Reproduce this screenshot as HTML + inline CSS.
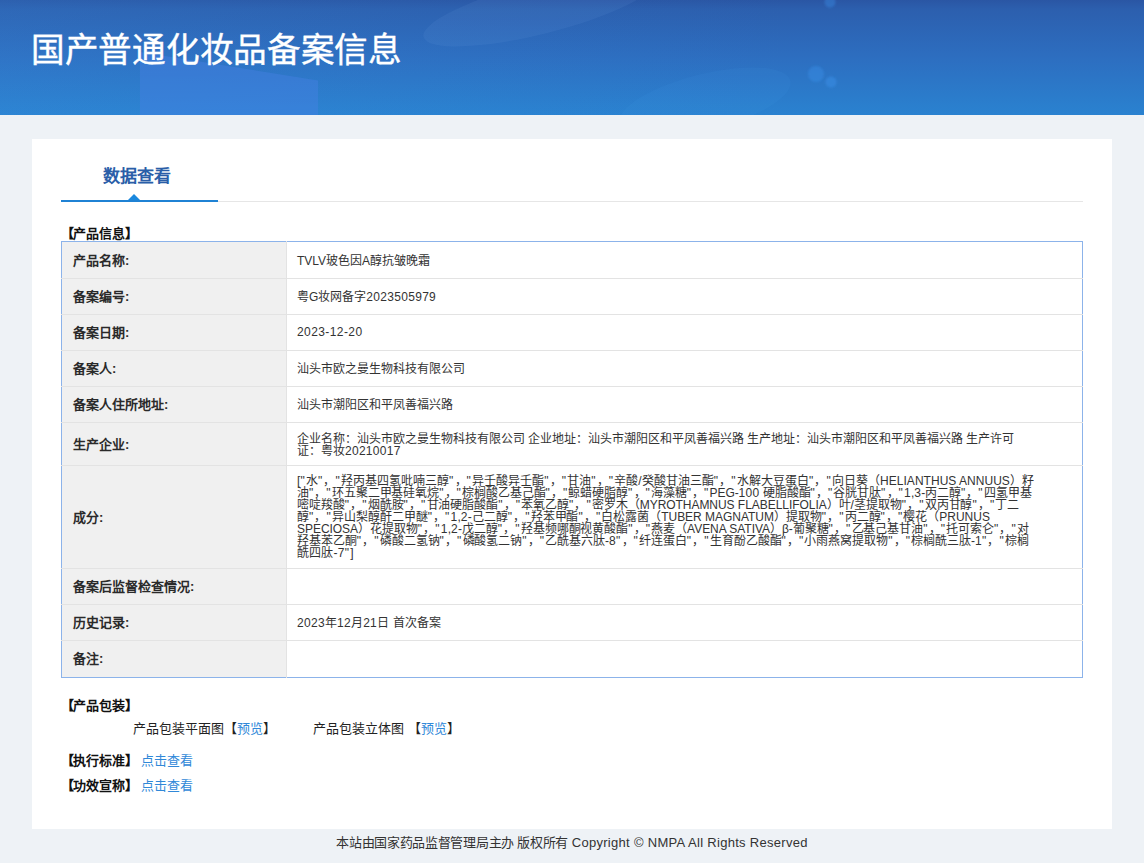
<!DOCTYPE html>
<html lang="zh-CN"><head><meta charset="utf-8">
<style>
*{margin:0;padding:0;box-sizing:border-box}
html,body{width:1144px;height:863px;overflow:hidden}
body{background:#eef2f6;font-family:"Liberation Sans",sans-serif;color:#333;position:relative}
#hd{position:absolute;left:0;top:0;width:1144px;height:115px;overflow:hidden;
 background:linear-gradient(90deg,rgba(60,150,230,0.16) 0%,rgba(60,150,230,0.05) 40%,rgba(60,150,230,0) 70%),linear-gradient(180deg,#2a56a4 0%,#2c5fae 8%,#2d6ec0 50%,#2a82d0 100%)}
#hd svg{position:absolute;left:0;top:0}
#hd h1{position:absolute;left:31px;top:28px;letter-spacing:-0.3px;font-size:33.6px;font-weight:normal;-webkit-text-stroke:0.4px #fff;color:#fff;line-height:46px;white-space:nowrap}
#card{position:absolute;left:32px;top:139px;width:1080px;height:690px;background:#fff}
#tab{position:absolute;left:71px;top:26px;font-size:17px;font-weight:bold;color:#2a5ea8;line-height:24px}
#tline{position:absolute;left:29px;top:62px;width:1022px;height:1px;background:#e6e6e6}
#tblue{position:absolute;left:29px;top:61px;width:157px;height:2px;background:#1f82d4}
#tri{position:absolute;left:96px;top:55px;width:0;height:0;border-left:6px solid transparent;border-right:6px solid transparent;border-bottom:6px solid #1a88de}
.sec{position:absolute;font-size:13px;font-weight:bold;color:#111;line-height:16px;white-space:nowrap;letter-spacing:-0.2px}
table{position:absolute;left:29px;top:102px;width:1022px;border-collapse:collapse;border:1px solid #8cb3ea}
td{border-top:1px solid #e3e3e3;font-size:12px;vertical-align:middle;padding-bottom:2px}
tr:first-child td{border-top:0}
tr:last-child td{padding-bottom:4px}
td.l{width:225px;background:#f0f0f0;font-weight:bold;font-size:13px;color:#2a2a2a;padding-left:11px;border-right:1px solid #e3e3e3}
td.v{padding-left:10px;color:#333;font-weight:350}
.pk{position:absolute;font-size:13px;color:#222;line-height:16px;white-space:nowrap;font-weight:350}
.lk{color:#3088d8}
.ml{line-height:12px;white-space:nowrap;position:relative;top:1px}
.ml div{display:block;white-space:nowrap}
.q{letter-spacing:1.2px}
.d{letter-spacing:0.3px}
#ft{position:absolute;left:0;top:834px;width:1144px;text-align:center;font-size:13px;color:#333;line-height:18px;font-weight:350}
</style></head><body>
<div id="hd"><svg width="1144" height="115" viewBox="0 0 1144 115">
<defs><filter id="bl" x="-20%" y="-20%" width="140%" height="140%"><feGaussianBlur stdDeviation="1.2"/></filter></defs>
<polygon points="140,52 318,80.5 318,115 140,115" fill="rgb(72,128,228)" fill-opacity="0.42"/>
<ellipse cx="540" cy="8" rx="120" ry="26" transform="rotate(-14 540 8)" fill="rgb(150,200,255)" fill-opacity="0.07"/>
<ellipse cx="705" cy="102" rx="88" ry="28" transform="rotate(-14 705 102)" fill="rgb(80,170,240)" fill-opacity="0.08"/>
<circle cx="816" cy="74" r="8" fill="rgb(60,150,240)" fill-opacity="0.35" filter="url(#bl)"/>
<circle cx="831" cy="82" r="5.5" fill="rgb(60,150,240)" fill-opacity="0.4" filter="url(#bl)"/>
<circle cx="830" cy="2" r="5.5" fill="rgb(60,150,240)" fill-opacity="0.35" filter="url(#bl)"/>
</svg><h1>国产普通化妆品备案信息</h1></div>
<div id="card">
 <div id="tab">数据查看</div>
 <div id="tline"></div><div id="tblue"></div><div id="tri"></div>
 <div class="sec" style="left:28.5px;top:86.5px">【产品信息】</div>
 <table>
  <tr style="height:37px"><td class="l">产品名称:</td><td class="v"><span id="v1">TVLV玻色因A醇抗皱晚霜</span></td></tr>
  <tr style="height:36px"><td class="l">备案编号:</td><td class="v"><span id="v2">粤G妆网备字<span class="d">2023505979</span></span></td></tr>
  <tr style="height:36px"><td class="l">备案日期:</td><td class="v"><span id="v3"><span style="letter-spacing:0.41px">2023-12-20</span></span></td></tr>
  <tr style="height:36px"><td class="l">备案人:</td><td class="v"><span id="v4">汕头市欧之曼生物科技有限公司</span></td></tr>
  <tr style="height:36px"><td class="l">备案人住所地址:</td><td class="v"><span id="v5">汕头市潮阳区和平凤善福兴路</span></td></tr>
  <tr style="height:43px"><td class="l">生产企业:</td><td class="v"><div class="ml" style="top:2px"><div id="m1" style="letter-spacing:-0.016px">企业名称：汕头市欧之曼生物科技有限公司 企业地址：汕头市潮阳区和平凤善福兴路 生产地址：汕头市潮阳区和平凤善福兴路 生产许可</div><div id="m2" style="letter-spacing:-0.017px">证：粤妆<span class="d">20210017</span></div></div></td></tr>
  <tr style="height:103px"><td class="l">成分:</td><td class="v"><div class="ml">
<div id="i1" style="letter-spacing:0.028px">[<span class="q">"</span>水<span class="q">"</span>，<span class="q">"</span>羟丙基四氢吡喃三醇<span class="q">"</span>，<span class="q">"</span>异壬酸异壬酯<span class="q">"</span>，<span class="q">"</span>甘油<span class="q">"</span>，<span class="q">"</span>辛酸/癸酸甘油三酯<span class="q">"</span>，<span class="q">"</span>水解大豆蛋白<span class="q">"</span>，<span class="q">"</span>向日葵（HELIANTHUS ANNUUS）籽</div>
<div id="i2" style="letter-spacing:-0.074px">油<span class="q">"</span>，<span class="q">"</span>环五聚二甲基硅氧烷<span class="q">"</span>，<span class="q">"</span>棕榈酸乙基己酯<span class="q">"</span>，<span class="q">"</span>鲸蜡硬脂醇<span class="q">"</span>，<span class="q">"</span>海藻糖<span class="q">"</span>，<span class="q">"</span>PEG-<span class="d">100</span> 硬脂酸酯<span class="q">"</span>，<span class="q">"</span>谷胱甘肽<span class="q">"</span>，<span class="q">"</span><span class="d">1</span>,<span class="d">3</span>-丙二醇<span class="q">"</span>，<span class="q">"</span>四氢甲基</div>
<div id="i3" style="letter-spacing:-0.044px">嘧啶羧酸<span class="q">"</span>，<span class="q">"</span>烟酰胺<span class="q">"</span>，<span class="q">"</span>甘油硬脂酸酯<span class="q">"</span>，<span class="q">"</span>苯氧乙醇<span class="q">"</span>，<span class="q">"</span>密罗木（MYROTHAMNUS FLABELLIFOLIA）叶/茎提取物<span class="q">"</span>，<span class="q">"</span>双丙甘醇<span class="q">"</span>，<span class="q">"</span>丁二</div>
<div id="i4" style="letter-spacing:-0.032px">醇<span class="q">"</span>，<span class="q">"</span>异山梨醇酐二甲醚<span class="q">"</span>，<span class="q">"</span><span class="d">1</span>,<span class="d">2</span>-己二醇<span class="q">"</span>，<span class="q">"</span>羟苯甲酯<span class="q">"</span>，<span class="q">"</span>白松露菌（TUBER MAGNATUM）提取物<span class="q">"</span>，<span class="q">"</span>丙二醇<span class="q">"</span>，<span class="q">"</span>樱花（PRUNUS</div>
<div id="i5" style="letter-spacing:-0.043px">SPECIOSA）花提取物<span class="q">"</span>，<span class="q">"</span><span class="d">1</span>,<span class="d">2</span>-戊二醇<span class="q">"</span>，<span class="q">"</span>羟基频哪酮视黄酸酯<span class="q">"</span>，<span class="q">"</span>燕麦（AVENA SATIVA）β-葡聚糖<span class="q">"</span>，<span class="q">"</span>乙基己基甘油<span class="q">"</span>，<span class="q">"</span>托可索仑<span class="q">"</span>，<span class="q">"</span>对</div>
<div id="i6" style="letter-spacing:-0.033px">羟基苯乙酮<span class="q">"</span>，<span class="q">"</span>磷酸二氢钠<span class="q">"</span>，<span class="q">"</span>磷酸氢二钠<span class="q">"</span>，<span class="q">"</span>乙酰基六肽-<span class="d">8</span><span class="q">"</span>，<span class="q">"</span>纤连蛋白<span class="q">"</span>，<span class="q">"</span>生育酚乙酸酯<span class="q">"</span>，<span class="q">"</span>小雨燕窝提取物<span class="q">"</span>，<span class="q">"</span>棕榈酰三肽-<span class="d">1</span><span class="q">"</span>，<span class="q">"</span>棕榈</div>
<div id="i7" style="letter-spacing:0.200px">酰四肽-<span class="d">7</span><span class="q">"</span>]</div>
</div></td></tr>
  <tr style="height:36px"><td class="l">备案后监督检查情况:</td><td class="v"></td></tr>
  <tr style="height:36px"><td class="l">历史记录:</td><td class="v"><span id="v9"><span style="letter-spacing:0.13px"><span class="d">2023</span>年<span class="d">12</span>月<span class="d">21</span>日 首次备案</span></span></td></tr>
  <tr style="height:37px"><td class="l">备注:</td><td class="v"></td></tr>
 </table>
 <div class="sec" style="left:28.5px;top:558.5px">【产品包装】</div>
 <div class="pk" style="left:101px;top:582px">产品包装平面图【<span class="lk">预览</span>】</div>
 <div class="pk" style="left:281px;top:582px">产品包装立体图 【<span class="lk">预览</span>】</div>
 <div class="sec" style="left:28.5px;top:614px">【执行标准】<span class="lk" style="font-weight:350;margin-left:3.5px;letter-spacing:0.1px">点击查看</span></div>
 <div class="sec" style="left:28.5px;top:639px">【功效宣称】<span class="lk" style="font-weight:350;margin-left:3.5px;letter-spacing:0.1px">点击查看</span></div>
</div>
<div id="ft"><span id="ftc" style="letter-spacing:-0.3px">本站由国家药品监督管理局主办 版权所有</span> <span id="ftl" style="letter-spacing:0.3px">Copyright © NMPA All Rights Reserved</span></div>
</body></html>
